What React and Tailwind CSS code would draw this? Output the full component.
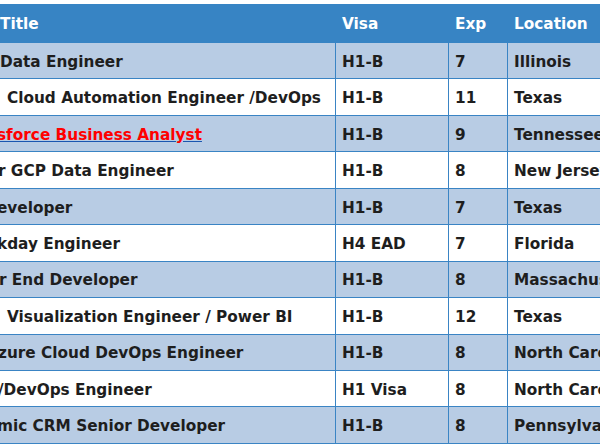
import React from "react";

const rows = [
  { t: "Data Engineer", ml: "ml-[0px]", v: "H1-B", e: "7", l: "Illinois", shade: true },
  { t: "Cloud Automation Engineer /DevOps", ml: "ml-[7px]", v: "H1-B", e: "11", l: "Texas" },
  { t: "sforce Business Analyst", ml: "ml-[-3px]", v: "H1-B", e: "9", l: "Tennessee", shade: true, link: true },
  { t: "r GCP Data Engineer", ml: "ml-[-2px]", v: "H1-B", e: "8", l: "New Jersey" },
  { t: "eveloper", ml: "ml-[-3px]", v: "H1-B", e: "7", l: "Texas", shade: true },
  { t: "kday Engineer", ml: "ml-[-3px]", v: "H4 EAD", e: "7", l: "Florida" },
  { t: "r End Developer", ml: "ml-[-1px]", v: "H1-B", e: "8", l: "Massachusetts", shade: true },
  { t: "Visualization Engineer / Power BI", ml: "ml-[7px]", v: "H1-B", e: "12", l: "Texas" },
  { t: "zure Cloud DevOps Engineer", ml: "ml-[-2px]", v: "H1-B", e: "8", l: "North Carolina", shade: true },
  { t: "/DevOps Engineer", ml: "ml-[-2px]", v: "H1 Visa", e: "8", l: "North Carolina" },
  { t: "mic CRM Senior Developer", ml: "ml-[-3px]", v: "H1-B", e: "8", l: "Pennsylvania", shade: true },
];

export default function App() {
  return (
    <div
      className="w-[600px] h-[445px] overflow-hidden bg-white pt-[4px] text-[15.3px] font-bold text-[#1e1e1e]"
      style={{ fontFamily: '"DejaVu Sans", "Comic Sans MS", sans-serif' }}
    >
      <div className="flex h-[39px] bg-[#3784c4] text-white items-center whitespace-nowrap pt-[2px]">
        <div className="w-[336px] shrink-0 overflow-hidden">Title</div>
        <div className="w-[113px] shrink-0 pl-[6px]">Visa</div>
        <div className="w-[59px] shrink-0 pl-[6px]">Exp</div>
        <div className="flex-1 pl-[6px]">Location</div>
      </div>
      {rows.map((r, i) => (
        <div
          key={i}
          className={`flex h-[36.45px] items-center whitespace-nowrap border-b border-[#3a84c4] ${r.shade ? "bg-[#b8cce4]" : "bg-white"}`}
        >
          <div className="w-[336px] shrink-0 h-full flex items-center pt-[3px] overflow-hidden border-r border-[#3a84c4]">
            {r.link ? (
              <span className={`${r.ml} text-[#ff0000] underline decoration-[#1a56b0]`}>{r.t}</span>
            ) : (
              <span className={r.ml}>{r.t}</span>
            )}
          </div>
          <div className="w-[113px] shrink-0 h-full flex items-center pt-[3px] pl-[6px] border-r border-[#3a84c4]">{r.v}</div>
          <div className="w-[59px] shrink-0 h-full flex items-center pt-[3px] pl-[6px] border-r border-[#3a84c4]">{r.e}</div>
          <div className="flex-1 h-full flex items-center pt-[3px] pl-[6px] overflow-hidden">{r.l}</div>
        </div>
      ))}
    </div>
  );
}
